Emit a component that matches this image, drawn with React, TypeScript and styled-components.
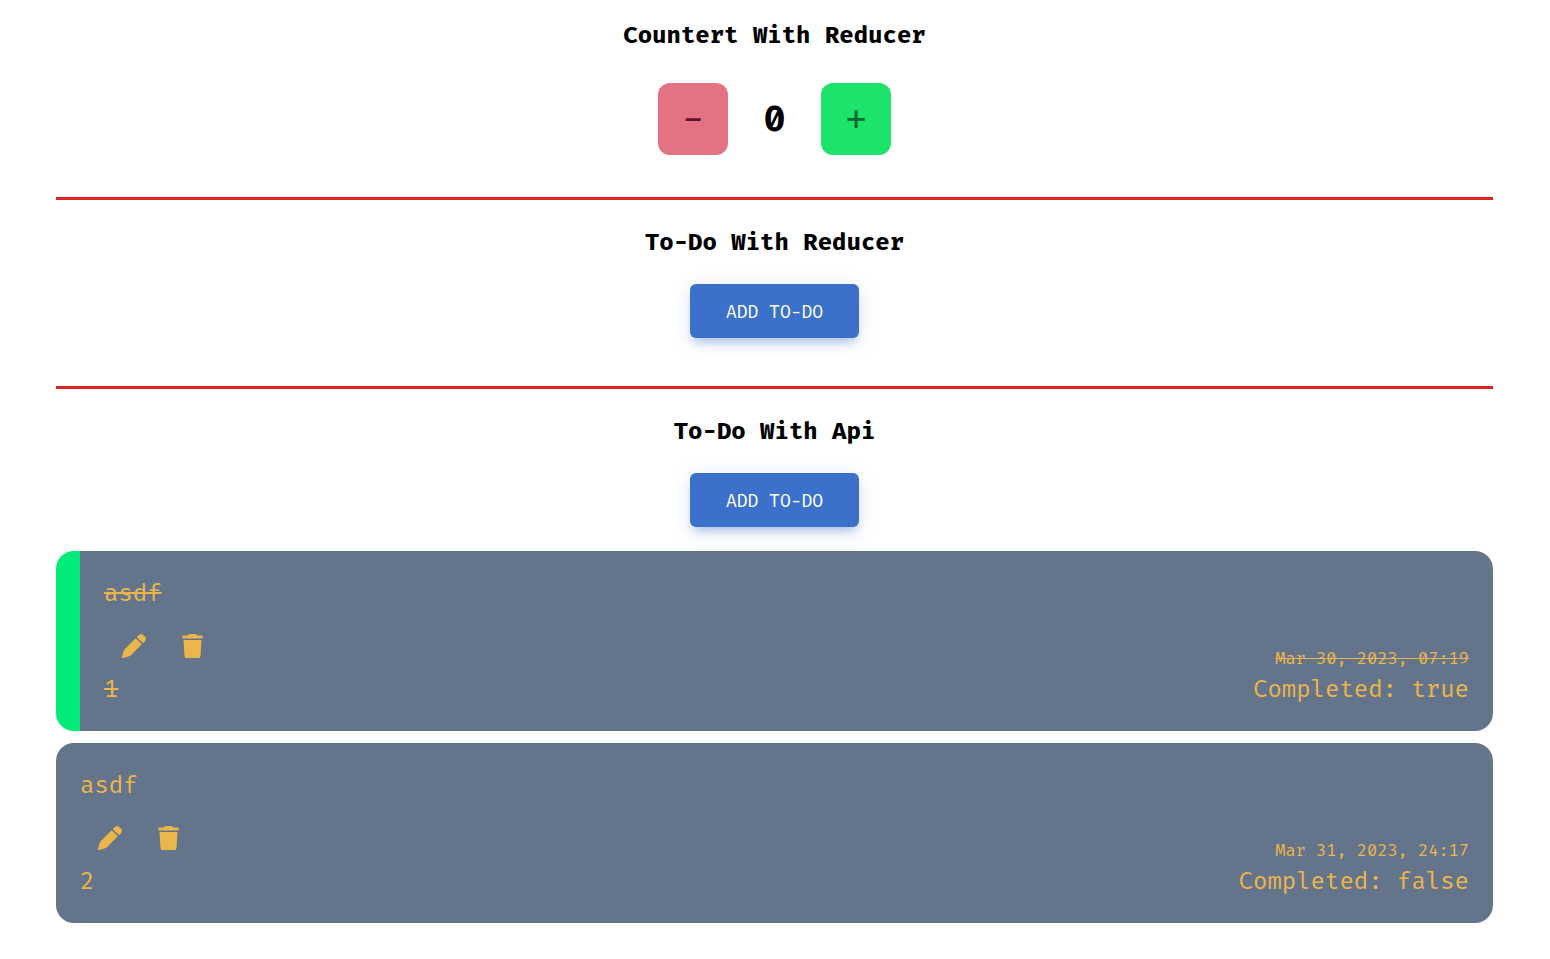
import React, { useState } from "react";
import styled, { createGlobalStyle } from "styled-components";
import { FaPen, FaTrash } from "react-icons/fa6";

const GlobalStyle = createGlobalStyle`
  *, *::before, *::after { box-sizing: border-box; }
  body {
    margin: 0;
    background: #fff;
    color: #000;
    font-family: "Fira Mono", "DejaVu Sans Mono", "Liberation Mono", monospace;
    font-variant-numeric: slashed-zero;
    font-size: 24px;
    line-height: 36px;
  }
  h1, h2, p { margin: 0; }
  button {
    border: 0;
    font: inherit;
    cursor: pointer;
  }
`;

const Page = styled.main`
  padding: 17px 57px 36px 56px;
`;

const Section = styled.section<{ $divided?: boolean; $space?: number }>`
  display: flex;
  flex-direction: column;
  align-items: center;
  gap: 24px;
  padding-bottom: ${(p) => p.$space ?? 0}px;
  border-bottom: ${(p) => (p.$divided ? "3px solid #e02424" : "0")};
  margin-bottom: 24px;
`;

const Heading = styled.h2`
  font-size: 24px;
  line-height: 36px;
  font-weight: 700;
  text-align: center;
`;

const Counter = styled.div`
  display: flex;
  align-items: center;
  padding-top: 6px;
  font-family: "Fira Code", "DejaVu Sans Mono", "Liberation Mono", monospace;
  font-variant-numeric: normal;
  font-size: 36px;
  line-height: 54px;
`;

const StepButton = styled.button<{ $tone: "down" | "up" }>`
  width: 70px;
  height: 72px;
  padding: 10px 0 8px;
  border-radius: 12px;
  background: ${(p) => (p.$tone === "down" ? "#e37283" : "#1ee36b")};
  color: ${(p) => (p.$tone === "down" ? "#611427" : "#0e6632")};
`;

const Count = styled.output`
  min-width: 93px;
  padding-top: 2px;
  font-weight: 700;
  text-align: center;
`;

const AddButton = styled.button`
  padding: 15px 36px 12px;
  border-radius: 6px;
  background: #3b71ca;
  color: #fff;
  font-size: 18px;
  line-height: 27px;
  text-transform: uppercase;
  box-shadow:
    0 8px 9px -4px rgba(59, 113, 202, 0.3),
    0 4px 18px 0 rgba(59, 113, 202, 0.2);
`;

const TodoList = styled.ul`
  align-self: stretch;
  display: flex;
  flex-direction: column;
  gap: 12px;
  margin: 0;
  padding: 0;
  list-style: none;
`;

const Card = styled.li<{ $done: boolean }>`
  display: flex;
  justify-content: space-between;
  align-items: flex-end;
  padding: 24px;
  border-left: ${(p) => (p.$done ? "24px solid #00eb78" : "0")};
  border-radius: 18px;
  background: #64748b;
  color: #eab54b;
`;

const Text = styled.p<{ $done: boolean }>`
  text-decoration: ${(p) => (p.$done ? "line-through" : "none")};
`;

const Actions = styled.div`
  display: flex;
  padding: 11px 0 1px;
`;

const IconButton = styled.button`
  display: flex;
  align-items: center;
  height: 48px;
  padding: 0 18px;
  background: transparent;
  color: inherit;
`;

const PenIcon = styled(FaPen)`
  width: 24px;
  height: 24px;
`;

const TrashIcon = styled(FaTrash)`
  width: 21px;
  height: 24px;
`;

const Meta = styled.div`
  text-align: right;
`;

const Stamp = styled.time<{ $done: boolean }>`
  display: block;
  font-size: 17px;
  line-height: 24px;
  text-decoration: ${(p) => (p.$done ? "line-through" : "none")};
`;

const todos = [
  { id: 1, title: "asdf", date: "Mar 30, 2023, 07:19", completed: true },
  { id: 2, title: "asdf", date: "Mar 31, 2023, 24:17", completed: false },
];

export default function App() {
  const [count, setCount] = useState(0);

  return (
    <>
      <GlobalStyle />
      <Page>
        <Section $divided $space={42}>
          <Heading>Countert With Reducer</Heading>
          <Counter>
            <StepButton $tone="down" onClick={() => setCount(count - 1)}>-</StepButton>
            <Count>{count}</Count>
            <StepButton $tone="up" onClick={() => setCount(count + 1)}>+</StepButton>
          </Counter>
        </Section>
        <Section $divided $space={48}>
          <Heading>To-Do With Reducer</Heading>
          <AddButton>Add To-Do</AddButton>
        </Section>
        <Section>
          <Heading>To-Do With Api</Heading>
          <AddButton>Add To-Do</AddButton>
          <TodoList>
            {todos.map((todo) => (
              <Card key={todo.id} $done={todo.completed}>
                <div>
                  <Text $done={todo.completed}>{todo.title}</Text>
                  <Actions>
                    <IconButton aria-label="Edit"><PenIcon /></IconButton>
                    <IconButton aria-label="Delete"><TrashIcon /></IconButton>
                  </Actions>
                  <Text $done={todo.completed}>{todo.id}</Text>
                </div>
                <Meta>
                  <Stamp $done={todo.completed}>{todo.date}</Stamp>
                  <p>Completed: {String(todo.completed)}</p>
                </Meta>
              </Card>
            ))}
          </TodoList>
        </Section>
      </Page>
    </>
  );
}
